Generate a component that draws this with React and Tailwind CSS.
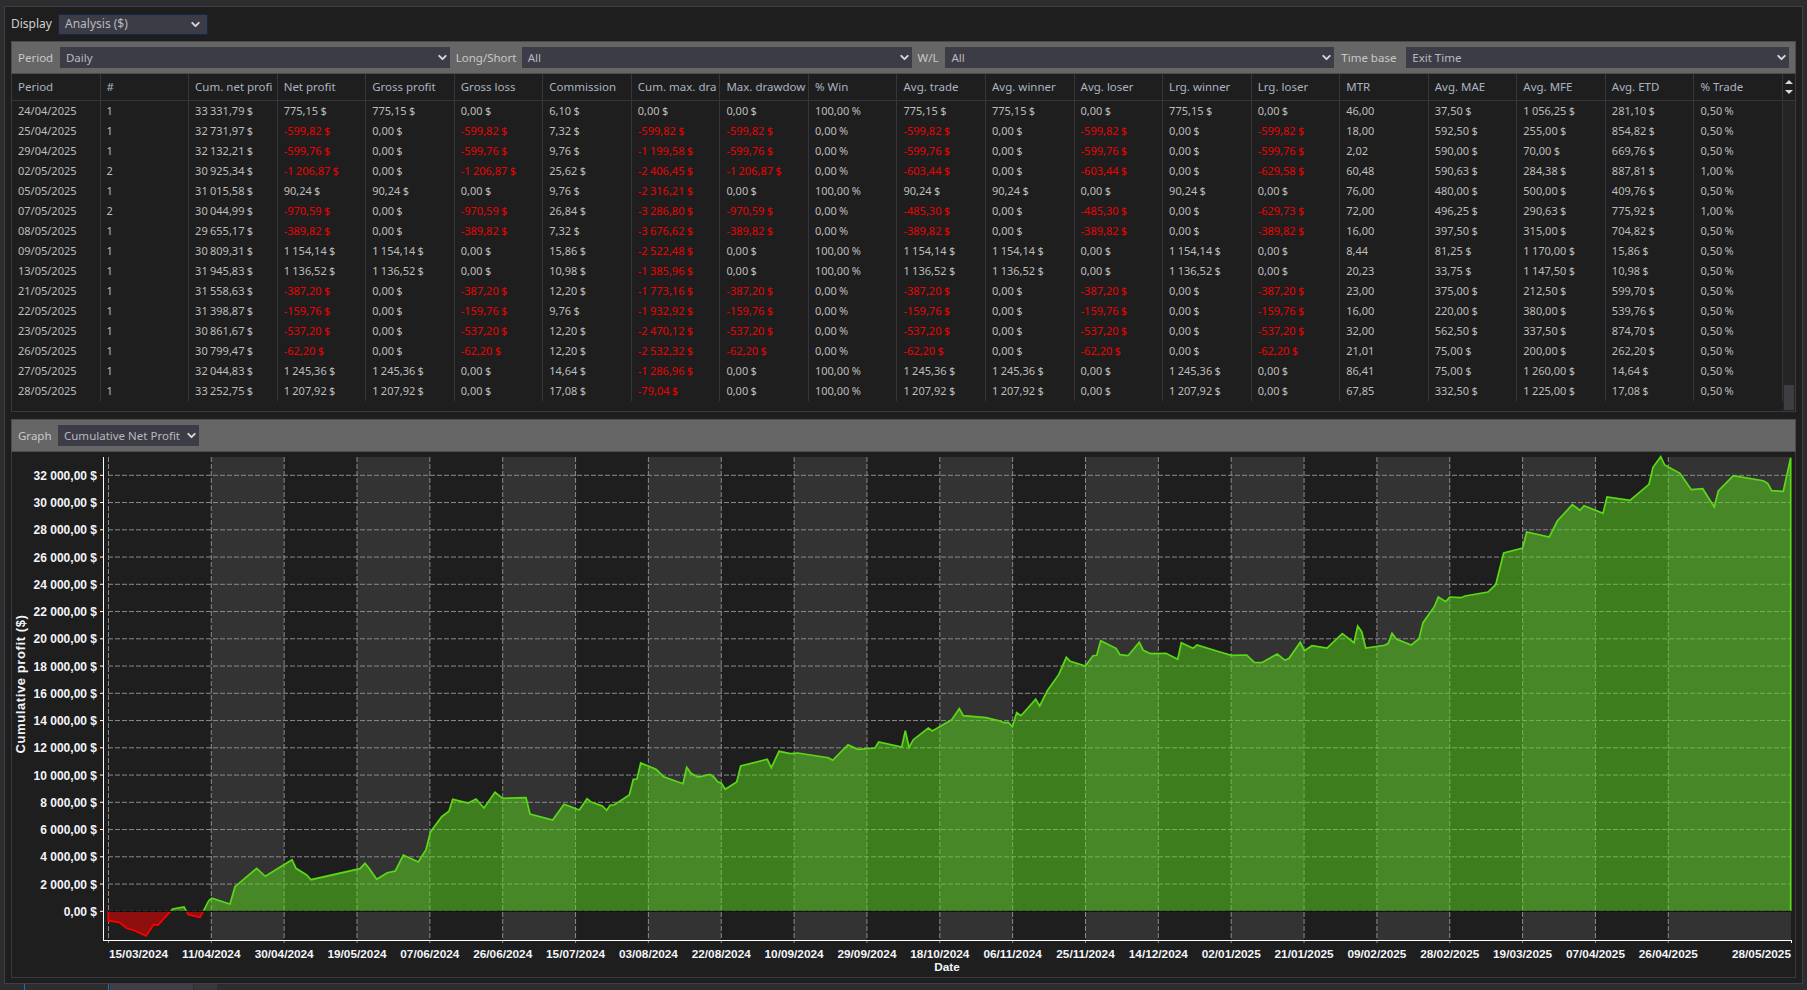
import React from 'react'
import { ChevronDown } from 'lucide-react'

const columns = [
  'Period', '#', 'Cum. net profi', 'Net profit', 'Gross profit', 'Gross loss', 'Commission', 'Cum. max. dra', 'Max. drawdow', '% Win',
  'Avg. trade', 'Avg. winner', 'Avg. loser', 'Lrg. winner', 'Lrg. loser', 'MTR', 'Avg. MAE', 'Avg. MFE', 'Avg. ETD', '% Trade',
]

const rows = [
  '24/04/2025|1|33 331,79 $|775,15 $|775,15 $|0,00 $|6,10 $|0,00 $|0,00 $|100,00 %|775,15 $|775,15 $|0,00 $|775,15 $|0,00 $|46,00|37,50 $|1 056,25 $|281,10 $|0,50 %',
  '25/04/2025|1|32 731,97 $|-599,82 $|0,00 $|-599,82 $|7,32 $|-599,82 $|-599,82 $|0,00 %|-599,82 $|0,00 $|-599,82 $|0,00 $|-599,82 $|18,00|592,50 $|255,00 $|854,82 $|0,50 %',
  '29/04/2025|1|32 132,21 $|-599,76 $|0,00 $|-599,76 $|9,76 $|-1 199,58 $|-599,76 $|0,00 %|-599,76 $|0,00 $|-599,76 $|0,00 $|-599,76 $|2,02|590,00 $|70,00 $|669,76 $|0,50 %',
  '02/05/2025|2|30 925,34 $|-1 206,87 $|0,00 $|-1 206,87 $|25,62 $|-2 406,45 $|-1 206,87 $|0,00 %|-603,44 $|0,00 $|-603,44 $|0,00 $|-629,58 $|60,48|590,63 $|284,38 $|887,81 $|1,00 %',
  '05/05/2025|1|31 015,58 $|90,24 $|90,24 $|0,00 $|9,76 $|-2 316,21 $|0,00 $|100,00 %|90,24 $|90,24 $|0,00 $|90,24 $|0,00 $|76,00|480,00 $|500,00 $|409,76 $|0,50 %',
  '07/05/2025|2|30 044,99 $|-970,59 $|0,00 $|-970,59 $|26,84 $|-3 286,80 $|-970,59 $|0,00 %|-485,30 $|0,00 $|-485,30 $|0,00 $|-629,73 $|72,00|496,25 $|290,63 $|775,92 $|1,00 %',
  '08/05/2025|1|29 655,17 $|-389,82 $|0,00 $|-389,82 $|7,32 $|-3 676,62 $|-389,82 $|0,00 %|-389,82 $|0,00 $|-389,82 $|0,00 $|-389,82 $|16,00|397,50 $|315,00 $|704,82 $|0,50 %',
  '09/05/2025|1|30 809,31 $|1 154,14 $|1 154,14 $|0,00 $|15,86 $|-2 522,48 $|0,00 $|100,00 %|1 154,14 $|1 154,14 $|0,00 $|1 154,14 $|0,00 $|8,44|81,25 $|1 170,00 $|15,86 $|0,50 %',
  '13/05/2025|1|31 945,83 $|1 136,52 $|1 136,52 $|0,00 $|10,98 $|-1 385,96 $|0,00 $|100,00 %|1 136,52 $|1 136,52 $|0,00 $|1 136,52 $|0,00 $|20,23|33,75 $|1 147,50 $|10,98 $|0,50 %',
  '21/05/2025|1|31 558,63 $|-387,20 $|0,00 $|-387,20 $|12,20 $|-1 773,16 $|-387,20 $|0,00 %|-387,20 $|0,00 $|-387,20 $|0,00 $|-387,20 $|23,00|375,00 $|212,50 $|599,70 $|0,50 %',
  '22/05/2025|1|31 398,87 $|-159,76 $|0,00 $|-159,76 $|9,76 $|-1 932,92 $|-159,76 $|0,00 %|-159,76 $|0,00 $|-159,76 $|0,00 $|-159,76 $|16,00|220,00 $|380,00 $|539,76 $|0,50 %',
  '23/05/2025|1|30 861,67 $|-537,20 $|0,00 $|-537,20 $|12,20 $|-2 470,12 $|-537,20 $|0,00 %|-537,20 $|0,00 $|-537,20 $|0,00 $|-537,20 $|32,00|562,50 $|337,50 $|874,70 $|0,50 %',
  '26/05/2025|1|30 799,47 $|-62,20 $|0,00 $|-62,20 $|12,20 $|-2 532,32 $|-62,20 $|0,00 %|-62,20 $|0,00 $|-62,20 $|0,00 $|-62,20 $|21,01|75,00 $|200,00 $|262,20 $|0,50 %',
  '27/05/2025|1|32 044,83 $|1 245,36 $|1 245,36 $|0,00 $|14,64 $|-1 286,96 $|0,00 $|100,00 %|1 245,36 $|1 245,36 $|0,00 $|1 245,36 $|0,00 $|86,41|75,00 $|1 260,00 $|14,64 $|0,50 %',
  '28/05/2025|1|33 252,75 $|1 207,92 $|1 207,92 $|0,00 $|17,08 $|-79,04 $|0,00 $|100,00 %|1 207,92 $|1 207,92 $|0,00 $|1 207,92 $|0,00 $|67,85|332,50 $|1 225,00 $|17,08 $|0,50 %',
].map((r) => r.split('|'))

const yLabels = [
  '32 000,00 $', '30 000,00 $', '28 000,00 $', '26 000,00 $', '24 000,00 $', '22 000,00 $', '20 000,00 $', '18 000,00 $', '16 000,00 $',
  '14 000,00 $', '12 000,00 $', '10 000,00 $', '8 000,00 $', '6 000,00 $', '4 000,00 $', '2 000,00 $', '0,00 $',
]
const yTick = (i) => 475.3 + i * 27.25

const xLabels = [
  '11/04/2024', '30/04/2024', '19/05/2024', '07/06/2024', '26/06/2024', '15/07/2024', '03/08/2024', '22/08/2024', '10/09/2024', '29/09/2024', '18/10/2024',
  '06/11/2024', '25/11/2024', '14/12/2024', '02/01/2025', '21/01/2025', '09/02/2025', '28/02/2025', '19/03/2025', '07/04/2025', '26/04/2025',
]
const xTick = (i) => 211.3 + i * 72.85

// traced from the picture, x/y measured at 3x from (ox, oy)
const trace = (ox, oy, pts) => pts.map(([x, y]) => `${(ox + x / 3).toFixed(1)},${(oy + y / 3).toFixed(1)}`)

const curve = [
  ...trace(0, 780, [[325, 394], [325, 422], [358, 427], [380, 445], [405, 452], [438, 468], [461, 434], [474, 435], [511, 395], [518, 387], [552, 381], [565, 404], [600, 412], [610, 394], [626, 362], [635, 355], [690, 372], [705, 320], [770, 265], [796, 289], [876, 239], [888, 265], [920, 285], [933, 299], [1080, 266], [1095, 250], [1106, 263], [1130, 298], [1162, 278], [1186, 273], [1210, 225], [1255, 246], [1278, 209], [1291, 158], [1300, 144], [1325, 110], [1347, 94], [1358, 58], [1405, 69], [1428, 57], [1452, 84], [1485, 37]]),
  ...trace(500, 640, [[8, 475], [78, 473], [90, 522], [158, 540], [192, 493], [238, 510], [261, 476], [273, 486], [307, 498], [320, 511], [331, 495], [342, 495], [388, 465], [400, 418], [411, 417], [422, 369], [468, 388], [491, 410], [549, 431], [560, 382], [573, 400], [595, 411], [630, 403], [641, 411], [653, 425], [664, 430], [676, 448], [710, 426], [722, 378], [802, 358], [814, 383], [837, 334], [871, 341], [893, 339], [985, 353], [998, 361], [1044, 314], [1073, 328], [1125, 324], [1136, 306], [1205, 321], [1216, 272], [1227, 322], [1240, 299], [1285, 264], [1297, 273], [1355, 239], [1378, 206], [1390, 227], [1458, 233], [1500, 243]]),
  ...trace(1000, 560, [[12, 488], [25, 487], [37, 500], [50, 458], [63, 467], [107, 418], [119, 438], [142, 392], [176, 344], [199, 292], [211, 304], [256, 318], [279, 287], [290, 286], [302, 242], [348, 265], [360, 284], [384, 287], [418, 247], [430, 271], [452, 281], [498, 280], [533, 298], [544, 248], [579, 265], [591, 255], [660, 276], [694, 286], [740, 285], [763, 307], [785, 308], [832, 282], [855, 301], [867, 295], [901, 247], [913, 272], [936, 257], [981, 264], [1027, 221], [1062, 248], [1073, 198], [1085, 215], [1097, 264], [1154, 256], [1165, 250], [1176, 220], [1189, 237], [1234, 255], [1257, 236]]),
  ...trace(1400, 440, [[69, 548], [103, 500], [115, 471], [137, 485], [149, 471], [183, 473], [195, 468], [264, 456], [287, 434], [311, 339], [368, 324], [380, 276], [448, 291], [472, 243], [517, 194], [540, 211], [552, 197], [609, 220], [621, 171], [690, 181], [747, 133], [759, 82], [782, 50], [794, 75], [840, 100], [874, 149], [908, 146], [943, 201], [955, 153], [1000, 107], [1090, 122], [1103, 130], [1115, 152], [1150, 154], [1172, 53], [1172, 1414]]),
].join(' ')

const Select = ({ label, className }) => (
  <div className={`h-[21px] pl-[6px] flex items-center justify-between bg-[#3c3c46] text-[#b9b9be] ${className}`}>
    <span>{label}</span>
    <ChevronDown size={13} strokeWidth={3.5} className="text-[#d8d8d8]" />
  </div>
)

const Chart = () => (
  <svg viewBox="12 452 1784 525" className="block w-[1784px] h-[525px] font-['Liberation_Sans',sans-serif]">
    <defs>
      <clipPath id="above"><rect x="100" y="440" width="1700" height="471.3" /></clipPath>
      <clipPath id="below"><rect x="100" y="911.3" width="1700" height="40" /></clipPath>
    </defs>

    {/* alternating bands */}
    {[0, 2, 4, 6, 8, 10, 12, 14, 16, 18].map((k) => (
      <rect key={k} x={xTick(k)} y="457" width="72.85" height="483" fill="#333333" />
    ))}
    <rect x={xTick(20)} y="457" width={1791 - xTick(20)} height="483" fill="#333333" />

    {/* grid */}
    {yLabels.map((_, i) => (
      <g key={i}>
        <line x1="108" x2="1791" y1={yTick(i)} y2={yTick(i)} stroke="#8a8a8a" strokeDasharray="5 2" />
        <line x1="100" x2="104" y1={yTick(i)} y2={yTick(i)} stroke="#ffffff" />
      </g>
    ))}
    <line x1="108.5" x2="108.5" y1="457" y2="943" stroke="#8a8a8a" strokeDasharray="5 2" />
    {xLabels.map((_, i) => (
      <line key={i} x1={xTick(i)} x2={xTick(i)} y1="457" y2="943" stroke="#8a8a8a" strokeDasharray="5 2" />
    ))}

    {/* curve */}
    <g clipPath="url(#above)">
      <polygon points={curve} fill="#5edc1c" fillOpacity="0.5" />
      <polyline points={curve} fill="none" stroke="#5ad916" strokeWidth="1.7" />
    </g>
    <g clipPath="url(#below)">
      <polygon points={curve} fill="#ff0000" fillOpacity="0.5" />
      <polyline points={curve} fill="none" stroke="#ff0000" strokeWidth="1.7" />
    </g>
    <line x1="108" x2="1791" y1="911.3" y2="911.3" stroke="#000000" />

    {/* axes */}
    <line x1="103.5" x2="103.5" y1="457" y2="940.5" stroke="#ffffff" />
    <line x1="103" x2="1792" y1="940.5" y2="940.5" stroke="#ffffff" />
    <line x1="1791.5" x2="1791.5" y1="940" y2="943" stroke="#ffffff" />

    <g className="fill-[#f2f5fa] text-[12px] font-bold">
      {yLabels.map((t, i) => (
        <text key={t} x="97" y={yTick(i) + 4.5} textAnchor="end">{t}</text>
      ))}
    </g>
    <g className="fill-[#f2f5fa] text-[11.8px] font-bold">
      <text x="109" y="958">15/03/2024</text>
      {xLabels.map((t, i) => (
        <text key={t} x={xTick(i)} y="958" textAnchor="middle">{t}</text>
      ))}
      <text x="1791" y="958" textAnchor="end">28/05/2025</text>
      <text x="947" y="971" textAnchor="middle">Date</text>
      <text x="25" y="684" textAnchor="middle" transform="rotate(-90 25 684)" className="text-[13px] tracking-[0.6px]">Cumulative profit ($)</text>
    </g>
  </svg>
)

export default function App() {
  return (
    <div className="w-[1807px] h-[990px] overflow-hidden bg-[#2d2d30] pt-[6px] text-[11.5px] text-[#bdbdbd] font-['Noto_Sans',sans-serif]">
      <div className="mx-[4px] h-[978px] px-[6px] bg-[#1e1e1e] border border-[#3f3f46]">
        {/* Display */}
        <div className="h-[34px] flex items-center gap-[5px] py-[6px] text-[12px] text-[#d0d0d0]">
          <span className="w-[42px]">Display</span>
          <Select label="Analysis ($)" className="w-[150px] pr-[5px] border border-[#10294a]" />
        </div>

        {/* Filters */}
        <div className="h-[33px] w-[1785px] flex items-center px-[6px] bg-[#666666] border border-[#4c4c4c] text-[#c8c8c8]">
          <span className="w-[42px]">Period</span>
          <Select label="Daily" className="w-[390px] pr-[1px]" />
          <span className="w-[72px] pl-[6px]">Long/Short</span>
          <Select label="All" className="w-[390px] pr-[1px]" />
          <span className="w-[34px] pl-[6px]">W/L</span>
          <Select label="All" className="w-[389px] pr-[1px]" />
          <span className="w-[72px] pl-[7px]">Time base</span>
          <Select label="Exit Time" className="w-[383px] pr-[1px]" />
        </div>

        {/* Table */}
        <div className="h-[338px] w-[1785px] flex border border-t-0 border-[#3a3a3e]">
          <div className="w-[1771px]">
            <div className="h-[27px] grid grid-cols-[repeat(20,88.55px)] border-b border-[#36363a] text-[#aab4c0]">
              {columns.map((c) => (
                <div key={c} className="pl-[6px] flex items-center whitespace-nowrap overflow-hidden border-r border-[#36363a]">{c}</div>
              ))}
            </div>
            {rows.map((row) => (
              <div key={row[0]} className="h-[20px] grid grid-cols-[repeat(20,88.55px)] text-[11px] [word-spacing:-0.5px]">
                {row.map((v, i) => (
                  <div key={i} className={`pl-[6px] flex items-center whitespace-pre overflow-hidden border-r border-[#36363a] ${v.startsWith('-') ? 'text-[#ee0000]' : ''}`}>{v}</div>
                ))}
              </div>
            ))}
          </div>
          {/* Scrollbar */}
          <div className="flex-1 flex flex-col bg-[#252526]">
            <div className="h-[27px] flex flex-col items-center justify-center gap-[6px] bg-[#1e1e1e] border-b border-[#36363a]">
              <div className="w-0 h-0 border-x-[4px] border-x-transparent border-b-[4px] border-b-[#d8d8d8]" />
              <div className="w-0 h-0 border-x-[4px] border-x-transparent border-t-[4px] border-t-[#d8d8d8]" />
            </div>
            <div className="flex-1 flex flex-col justify-end pb-[1px] px-[1px]">
              <div className="h-[25px] bg-[#3e3e42]" />
            </div>
          </div>
        </div>

        {/* Graph */}
        <div className="mt-[7px] h-[33px] w-[1785px] flex items-center pl-[6px] bg-[#666666] border border-[#4c4c4c] text-[#c8c8c8]">
          <span className="w-[40px]">Graph</span>
          <Select label="Cumulative Net Profit" className="w-[141px] pr-[1px]" />
        </div>
        <div className="h-[526px] w-[1785px] border border-t-0 border-[#3a3a3e]">
          <Chart />
        </div>
      </div>

      {/* Tabs strip */}
      <div className="h-[6px] flex pl-[24px]">
        <div className="w-[85px] border-x border-[#007acc]" />
        <div className="w-[83px] ml-[1px] bg-[#3f3f46]" />
        <div className="w-[23px] ml-[1px] bg-[#38383c]" />
      </div>
    </div>
  )
}
